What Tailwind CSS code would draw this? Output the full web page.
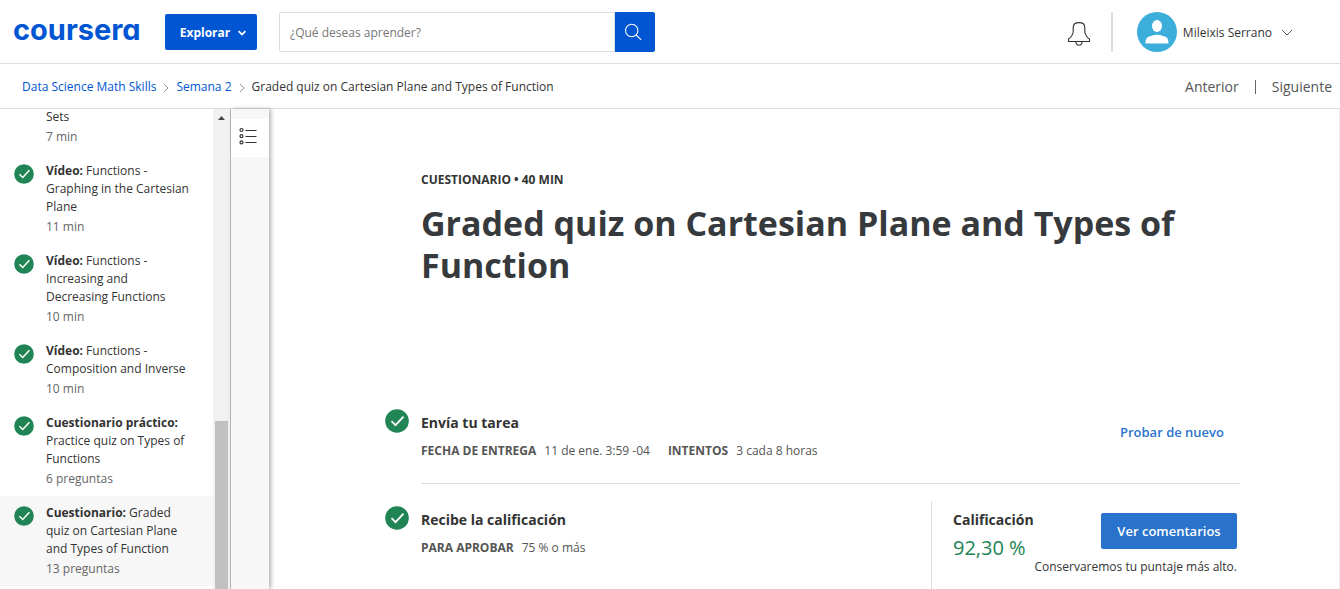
<!DOCTYPE html>
<html lang="es">
<head>
<meta charset="utf-8">
<meta name="viewport" content="width=device-width, initial-scale=1">
<title>Graded quiz on Cartesian Plane and Types of Function | Coursera</title>
<script src="https://cdn.jsdelivr.net/npm/@tailwindcss/browser@4"></script>
</head>
<body class="flex h-screen flex-col overflow-hidden bg-white font-['Open_Sans','Noto_Sans',sans-serif] text-[12px] leading-[18px] text-[#333]">
<svg class="hidden" aria-hidden="true">
  <symbol id="done" viewBox="0 0 24 24">
    <circle cx="12" cy="12" r="11.8" fill="#208455"/>
    <path d="M6.500 12.200l4 4 8-8.600" fill="none" stroke="#fff" stroke-width="1.800"/>
  </symbol>
</svg>

<header class="flex h-16 shrink-0 items-center border-b border-[#ddd] pl-[13px] pr-12">
  <a href="#" class="mb-1 w-[152px] font-['Inter',sans-serif] text-[29px] font-bold leading-10 text-[#0056d2] [font-feature-settings:'cv11']">coursera</a>
  <button class="flex h-9 w-[92px] items-center justify-center gap-2 rounded-[2px] bg-[#0056d2] pl-1 pt-0.5 text-[12px] font-bold text-white">Explorar
    <svg class="h-2 w-2" viewBox="0 0 8 8" fill="none" stroke="#fff" stroke-width="1.800"><path d="M.600 2.200L4 5.600l3.400-3.400"/></svg>
  </button>
  <form class="ml-[22px] flex h-10 w-[376px]">
    <input type="text" aria-label="Buscar" placeholder="¿Qué deseas aprender?" class="min-w-0 flex-1 rounded-l-[2px] border border-[#ddd] px-2.5 pt-0.5 font-['Open_Sans'] text-[12px] placeholder:text-[#777]">
    <button type="button" aria-label="Buscar" class="flex w-10 items-center justify-center rounded-r-[2px] bg-[#0056d2] pr-1">
      <svg class="h-[18px] w-[18px]" viewBox="0 0 18 18" fill="none" stroke="#fff" stroke-width="1.100"><circle cx="7.700" cy="7.500" r="6.200"/><path d="M12.200 12l5 4.800"/></svg>
    </button>
  </form>
  <div class="ml-auto flex items-center">
    <button aria-label="Notificaciones" class="mt-1">
      <svg class="h-6 w-6" viewBox="0 0 24 24" fill="none" stroke="#333" stroke-width="1.100"><path d="M1.500 19.500v-2.500c2.400-1.500 4-3.500 4.700-7V5.500C6.200 2.500 8.500.600 12 .600s5.800 1.900 5.800 4.900V10c.700 3.500 2.300 5.500 4.700 7v2.500zM8.800 19.800c.200 2.100 1.400 3.500 3.200 3.500s3-1.400 3.200-3.500"/></svg>
    </button>
    <div class="ml-5 h-10 w-0.5 bg-[#ddd]"></div>
    <button class="ml-6 flex items-center text-[12px]">
      <svg class="mr-1.5 h-10 w-10" viewBox="0 0 40 40"><circle cx="20" cy="20" r="20" fill="#3caedb"/><ellipse cx="20" cy="14" rx="5" ry="6" fill="#fff"/><path d="M8.500 31.500c0-5 2-7 5.500-7.500q6-2.500 12 0c3.500.500 5.500 2.500 5.500 7.500z" fill="#fff"/></svg>
      <span class="pt-0.5">Mileixis Serrano</span>
      <svg class="ml-2.5 h-2.5 w-2.5" viewBox="0 0 10 10" fill="none" stroke="#555"><path d="M0 3l5 5 5-5"/></svg>
    </button>
  </div>
</header>

<nav class="flex h-[45px] shrink-0 items-center border-b border-[#ddd] pl-[22px] pr-2 pt-0.5 text-[12px]" aria-label="Ruta">
  <a href="#" class="text-[#0056d2]">Data Science Math Skills</a>
  <svg class="mx-[7px] mt-0.5 h-2 w-[6px]" viewBox="0 0 6 8" fill="none" stroke="#999"><path d="M1 0l4 4-4 4"/></svg>
  <a href="#" class="text-[#0056d2]">Semana 2</a>
  <svg class="mx-[7px] mt-0.5 h-2 w-[6px]" viewBox="0 0 6 8" fill="none" stroke="#999"><path d="M1 0l4 4-4 4"/></svg>
  <span class="w-[301px] overflow-hidden whitespace-nowrap">Graded quiz on Cartesian Plane and Types of Function</span>
  <div class="ml-auto flex items-center text-[14px] text-[#555]">
    <a href="#">Anterior</a>
    <span class="mx-4 h-3.5 w-px bg-[#666]"></span>
    <a href="#">Siguiente</a>
  </div>
</nav>

<div class="flex min-h-0 flex-1">
  <aside class="flex w-[231px] shrink-0 overflow-hidden border-r border-[#bbb]">
    <ul class="-mt-px w-[213px] shrink-0">
      <li class="pb-2 pl-[46px]"><a href="#" class="block">Sets<span class="mt-0.5 block text-[#666]">7 min</span></a></li>
      <li><a href="#" class="flex gap-3 py-2 pl-3.5 pr-6"><svg class="mt-0.5 h-5 w-5 shrink-0"><use href="#done"/></svg><span><b>Vídeo:</b> Functions -<br>Graphing in the Cartesian<br>Plane<span class="mt-0.5 block text-[#666]">11 min</span></span></a></li>
      <li><a href="#" class="flex gap-3 py-2 pl-3.5 pr-6"><svg class="mt-0.5 h-5 w-5 shrink-0"><use href="#done"/></svg><span><b>Vídeo:</b> Functions -<br>Increasing and<br>Decreasing Functions<span class="mt-0.5 block text-[#666]">10 min</span></span></a></li>
      <li><a href="#" class="flex gap-3 py-2 pl-3.5 pr-6"><svg class="mt-0.5 h-5 w-5 shrink-0"><use href="#done"/></svg><span><b>Vídeo:</b> Functions -<br>Composition and Inverse<span class="mt-0.5 block text-[#666]">10 min</span></span></a></li>
      <li><a href="#" class="flex gap-3 py-2 pl-3.5 pr-6"><svg class="mt-0.5 h-5 w-5 shrink-0"><use href="#done"/></svg><span><b>Cuestionario práctico:</b><br>Practice quiz on Types of<br>Functions<span class="mt-0.5 block text-[#666]">6 preguntas</span></span></a></li>
      <li class="bg-[#f7f7f7]"><a href="#" class="flex gap-3 py-2 pl-3.5 pr-6"><svg class="mt-0.5 h-5 w-5 shrink-0"><use href="#done"/></svg><span><b>Cuestionario:</b> Graded<br>quiz on Cartesian Plane<br>and Types of Function<span class="mt-0.5 block text-[#666]">13 preguntas</span></span></a></li>
    </ul>
    <div class="flex flex-1 flex-col bg-[#f1f1f1] pl-0.5 pr-0.5" aria-hidden="true">
      <svg class="ml-[3px] mt-[7px] h-1 w-[7px]" viewBox="0 0 7 4"><path d="M0 4l3.500-4L7 4z" fill="#444"/></svg>
      <div class="mt-[301px] w-[13px] flex-1 bg-[#c1c1c1]"></div>
    </div>
  </aside>
  <div class="w-[38px] shrink-0 bg-[#f7f7f7] pt-2.5 shadow-[2px_0_4px_rgba(0,0,0,0.3)]">
    <button aria-label="Contenido" class="flex h-[38px] w-full items-center justify-center bg-white pb-1 pr-1">
      <svg class="h-[18px] w-[18px]" viewBox="0 0 18 18" fill="none" stroke="#333" stroke-width="1.200"><circle cx="2.500" cy="3" r="1.500"/><circle cx="2.500" cy="9.200" r="1.500"/><circle cx="2.500" cy="15.400" r="1.500"/><path d="M6.500 3.500h11M6.500 9.500h11M6.500 15.500h11"/></svg>
    </button>
  </div>
  <main class="flex min-w-0 flex-1 flex-col border-r border-[#eee] pl-[152px] pr-[99px] pt-[62px]">
    <p class="text-[12px] font-bold">CUESTIONARIO • 40 MIN</p>
    <h1 class="mt-[13px] h-[200px] text-[34px] font-bold leading-[42px] text-[#373a3c]">Graded quiz on Cartesian Plane and Types of<br>Function</h1>
    <section class="flex items-start justify-between border-b border-[#ddd] pb-[23px] pt-[11px]">
      <div class="-ml-9 flex gap-3">
        <svg class="-mt-1 h-6 w-6"><use href="#done"/></svg>
        <div>
          <h2 class="text-[14px] font-bold leading-5">Envía tu tarea</h2>
          <p class="mt-[9px] flex gap-2 text-[#555]"><strong class="font-bold">FECHA DE ENTREGA</strong> <span>11 de ene. 3:59 -04</span> <strong class="ml-2.5 font-bold">INTENTOS</strong> <span>3 cada 8 horas</span></p>
        </div>
      </div>
      <button class="mr-4 mt-2.5 text-[13px] font-semibold text-[#2a73cc]">Probar de nuevo</button>
    </section>
    <section class="flex flex-1 justify-between pt-[17px]">
      <div class="-ml-9 flex gap-3 pt-[9px]">
        <svg class="-mt-1 h-6 w-6"><use href="#done"/></svg>
        <div>
          <h2 class="text-[14px] font-bold leading-5">Recibe la calificación</h2>
          <p class="mt-[9px] flex gap-2 text-[#555]"><strong class="font-bold">PARA APROBAR</strong> <span>75 % o más</span></p>
        </div>
      </div>
      <div class="w-[309px] border-l border-[#ddd] pl-[21px] pr-[3px] pt-[9px]">
        <div class="flex justify-between">
          <div>
            <h2 class="text-[14px] font-bold leading-5">Calificación</h2>
            <p class="mt-1 text-[20px] leading-7 text-[#208455]">92,30 %</p>
          </div>
          <button class="mt-[3px] h-9 w-[136px] rounded-[2px] bg-[#2a73cc] text-[13px] font-semibold text-white">Ver comentarios</button>
        </div>
        <p class="-mt-1 text-right">Conservaremos tu puntaje más alto.</p>
      </div>
    </section>
  </main>
</div>
</body>
</html>
